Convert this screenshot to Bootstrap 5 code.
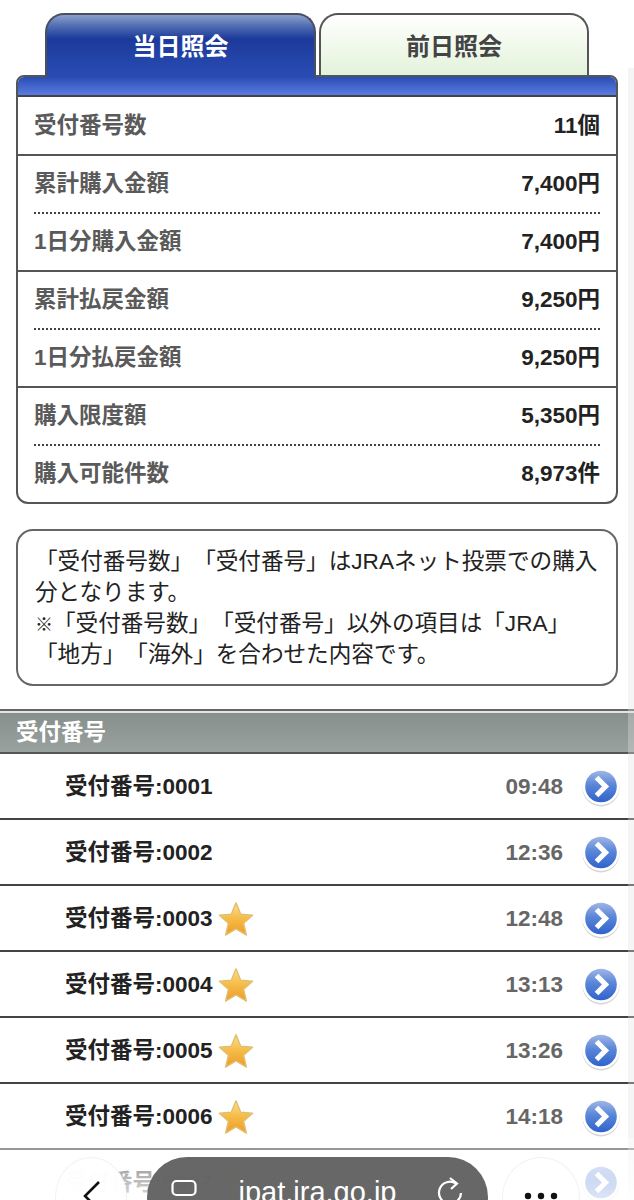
<!DOCTYPE html>
<html lang="ja">
<head>
<meta charset="utf-8">
<title>照会</title>
<link href="https://cdn.jsdelivr.net/npm/bootstrap@5.3.0/dist/css/bootstrap.min.css" rel="stylesheet">
<style>
html,body{background:#fff;height:1200px;overflow:hidden}
body{font-family:"Liberation Sans","Noto Sans CJK JP",sans-serif;position:relative;color:#222;text-spacing-trim:space-all}
.tabs-line{padding:13px 0 0 45px;position:relative;z-index:2;gap:3px;height:75px}
.day-tab{height:65px;border:2px solid #555;border-bottom:0;border-radius:19px 19px 0 0;font-size:24px;font-weight:700;padding-top:15px;line-height:34px;text-align:center}
.tab-on{width:271px;color:#fff;background:linear-gradient(#8d9fcb 0,#4f6cb3 18%,#1c3a9a 38%,#2a4db5 100%);border-color:#4a4f60;height:65px}
.tab-off{width:270px;height:62px;color:#444;background:linear-gradient(#fff 0,#f4faf0 40%,#e2f3da 100%)}
.sum-box{margin:0 16px;border:2px solid #555;border-radius:8px 8px 12px 12px;overflow:hidden;background:#fff}
.sum-bar{height:20px;background:linear-gradient(#2a4db5,#5a7ce2);border-bottom:2px solid #444}
.sum-group+.sum-group{border-top:2px solid #555}
.sum-row{height:58px;margin:0 16px;font-size:22.5px;font-weight:700;color:#5a5a5a}
.sum-bar+.sum-group .sum-row{height:57px}
.sum-group+.sum-group .sum-row:first-child{height:56px}
.sum-row.dot-top{border-top:2px dotted #444}
.sum-val{color:#222;font-size:22.5px}
.note-box{margin:25px 16px 0;height:157px;border:2px solid #666;border-radius:17px;padding:15px 17px 0;font-size:22.6px;color:#222;white-space:nowrap}
.note-line{height:31px;line-height:31px}
.note-mark{font-size:18px;line-height:1}
.sec-head{margin-top:23px;height:45px;background:linear-gradient(#868e8b,#9aa29f);border-top:2px solid #666;border-bottom:2px solid #555;box-shadow:inset 0 2px 0 #dfe3e1;color:#fff;font-size:22.5px;font-weight:700;padding:4px 0 0 16px;line-height:36px}
.rec-row{height:66px;border-bottom:2px solid #444;padding:2px 14px 0 65px;font-size:22.5px;font-weight:700;color:#222}
.rec-time{color:#666;margin-right:19px;font-size:22.5px}
.go-ico{width:38px;height:40px;display:block;flex:none}
.star-ico{width:36px;height:36px;margin-left:5px;flex:none;display:block}
.rec-name{height:38px;line-height:38px}
.edge-strip{position:absolute;right:0;top:68px;bottom:0;width:6px;background:rgba(225,225,225,.35);z-index:5}
.fade-foot{position:absolute;left:0;right:0;bottom:0;height:62px;background:linear-gradient(rgba(255,255,255,.35),rgba(255,255,255,.85));z-index:6}
.float-round{position:absolute;top:1157px;height:80px;border-radius:50%;background:rgba(255,255,255,.97);border:1px solid #f2f2f2;z-index:7}
.round-back{left:55px;width:72px}
.round-more{left:502px;width:78px}
.url-pill{position:absolute;z-index:8;left:147px;top:1157px;width:341px;height:80px;border-radius:40px;background:rgba(98,98,98,.97);color:#fff;font-size:29px;line-height:34px;text-align:center;padding-top:18px}
.ui-svg{position:absolute;z-index:9}
</style>
</head>
<body>
<svg width="0" height="0" class="position-absolute">
<defs>
<linearGradient id="gb" x1="0" y1="0" x2="0" y2="1"><stop offset="0" stop-color="#9fb6e6"/><stop offset=".45" stop-color="#5a86d8"/><stop offset="1" stop-color="#2f62cc"/></linearGradient>
<linearGradient id="gs" x1="0" y1="0" x2="0" y2="1"><stop offset="0" stop-color="#fbe08a"/><stop offset=".5" stop-color="#f5bb45"/><stop offset="1" stop-color="#ef9a2a"/></linearGradient>
<symbol id="go" viewBox="0 0 38 40"><circle cx="19" cy="21" r="18.5" fill="#b9b9b9" opacity=".6"/><circle cx="19" cy="19.5" r="18.5" fill="#fff"/><circle cx="19" cy="19.5" r="15.8" fill="url(#gb)"/><path d="M14.5 10.5 23.5 19.5 14.5 28.5" fill="none" stroke="#fff" stroke-width="5.2"/></symbol>
<symbol id="st" viewBox="0 0 38 38"><polygon points="19,2 24,14 36.5,15 27,23.5 30,36 19,29.5 8,36 11,23.5 1.5,15 14,14" fill="url(#gs)" stroke="#e0c070" stroke-width="1.5" stroke-linejoin="round"/></symbol>
</defs>
</svg>

<div class="d-flex tabs-line">
  <div class="day-tab tab-on">当日照会</div>
  <div class="day-tab tab-off">前日照会</div>
</div>
<div class="sum-box">
  <div class="sum-bar"></div>
  <div class="sum-group">
    <div class="sum-row d-flex justify-content-between align-items-center"><span>受付番号数</span><span class="sum-val">11個</span></div>
  </div>
  <div class="sum-group">
    <div class="sum-row d-flex justify-content-between align-items-center"><span>累計購入金額</span><span class="sum-val">7,400円</span></div>
    <div class="sum-row dot-top d-flex justify-content-between align-items-center"><span>1日分購入金額</span><span class="sum-val">7,400円</span></div>
  </div>
  <div class="sum-group">
    <div class="sum-row d-flex justify-content-between align-items-center"><span>累計払戻金額</span><span class="sum-val">9,250円</span></div>
    <div class="sum-row dot-top d-flex justify-content-between align-items-center"><span>1日分払戻金額</span><span class="sum-val">9,250円</span></div>
  </div>
  <div class="sum-group">
    <div class="sum-row d-flex justify-content-between align-items-center"><span>購入限度額</span><span class="sum-val">5,350円</span></div>
    <div class="sum-row dot-top d-flex justify-content-between align-items-center"><span>購入可能件数</span><span class="sum-val">8,973件</span></div>
  </div>
</div>

<div class="note-box">
  <div class="note-line">「受付番号数」「受付番号」はJRAネット投票での購入</div>
  <div class="note-line">分となります。</div>
  <div class="note-line"><span class="note-mark">※</span>「受付番号数」「受付番号」以外の項目は「JRA」</div>
  <div class="note-line">「地方」「海外」を合わせた内容です。</div>
</div>

<div class="sec-head">受付番号</div>

<div class="rec-row d-flex align-items-center"><span class="rec-name">受付番号:0001</span><span class="rec-time ms-auto">09:48</span><svg class="go-ico"><use href="#go"/></svg></div>
<div class="rec-row d-flex align-items-center"><span class="rec-name">受付番号:0002</span><span class="rec-time ms-auto">12:36</span><svg class="go-ico"><use href="#go"/></svg></div>
<div class="rec-row d-flex align-items-center"><span class="rec-name">受付番号:0003</span><svg class="star-ico"><use href="#st"/></svg><span class="rec-time ms-auto">12:48</span><svg class="go-ico"><use href="#go"/></svg></div>
<div class="rec-row d-flex align-items-center"><span class="rec-name">受付番号:0004</span><svg class="star-ico"><use href="#st"/></svg><span class="rec-time ms-auto">13:13</span><svg class="go-ico"><use href="#go"/></svg></div>
<div class="rec-row d-flex align-items-center"><span class="rec-name">受付番号:0005</span><svg class="star-ico"><use href="#st"/></svg><span class="rec-time ms-auto">13:26</span><svg class="go-ico"><use href="#go"/></svg></div>
<div class="rec-row d-flex align-items-center"><span class="rec-name">受付番号:0006</span><svg class="star-ico"><use href="#st"/></svg><span class="rec-time ms-auto">14:18</span><svg class="go-ico"><use href="#go"/></svg></div>
<div class="rec-row d-flex align-items-center"><span class="rec-name">受付番号:0007</span><svg class="star-ico"><use href="#st"/></svg><svg class="go-ico ms-auto"><use href="#go"/></svg></div>

<div class="edge-strip"></div>
<div class="fade-foot"></div>
<div class="float-round round-back"></div>
<div class="float-round round-more"></div>
<div class="url-pill">ipat.jra.go.jp</div>
<svg class="ui-svg" style="left:80px;top:1178px" width="24" height="30" viewBox="0 0 24 30"><path d="M19 4 5 18 19 32" fill="none" stroke="#111" stroke-width="2.6"/></svg>
<svg class="ui-svg" style="left:170px;top:1178px" width="28" height="22" viewBox="0 0 28 22"><rect x="2.5" y="3" width="23" height="14" rx="4" fill="none" stroke="#fff" stroke-width="2.2"/></svg>
<svg class="ui-svg" style="left:436px;top:1176px" width="30" height="26" viewBox="0 0 30 26"><path d="M20 7.5A11 11 0 1 0 25 17" fill="none" stroke="#fff" stroke-width="2.2"/><path d="M14 2 21 7.5 15 13" fill="none" stroke="#fff" stroke-width="2.2"/></svg>
<svg class="ui-svg" style="left:522px;top:1190px" width="38" height="10" viewBox="0 0 38 10"><circle cx="6" cy="6" r="3.2" fill="#111"/><circle cx="19" cy="6" r="3.2" fill="#111"/><circle cx="32" cy="6" r="3.2" fill="#111"/></svg>
<script src="https://cdn.jsdelivr.net/npm/bootstrap@5.3.0/dist/js/bootstrap.bundle.min.js"></script>
</body>
</html>
